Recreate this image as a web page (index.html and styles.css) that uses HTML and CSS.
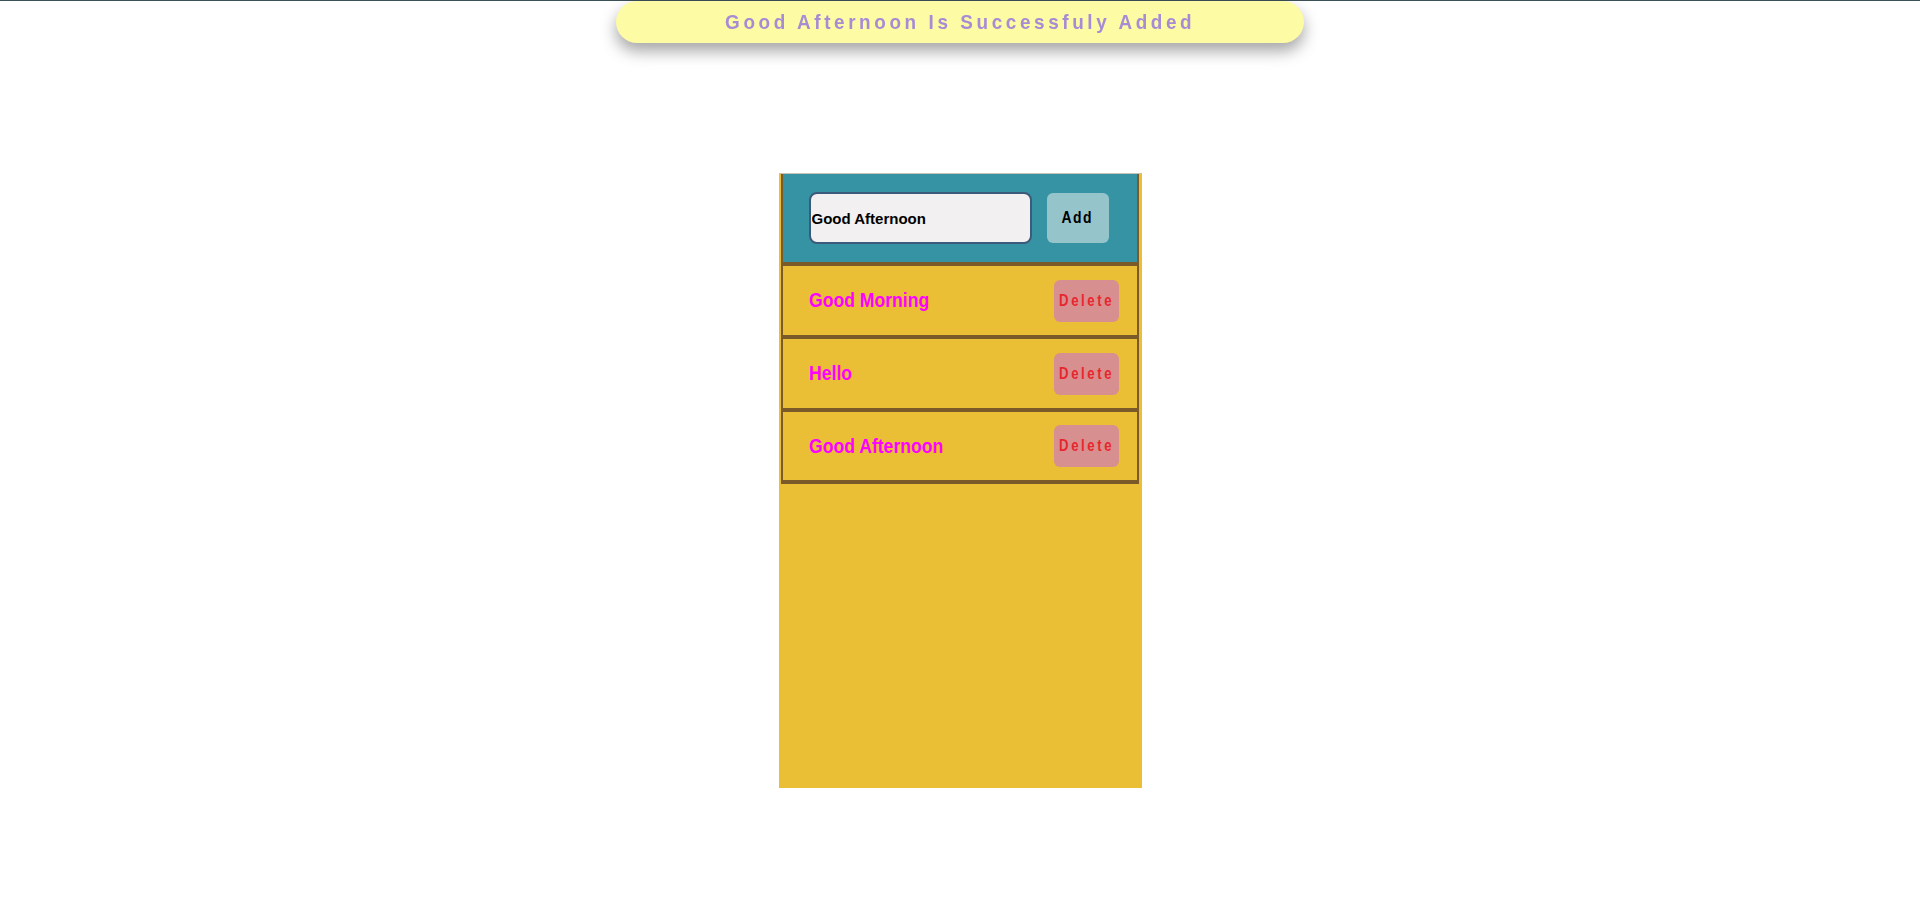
FILE: index.html
```html
<!DOCTYPE html>
<html lang="en">
<head>
<meta charset="utf-8">
<title>Todo</title>
<link rel="stylesheet" href="styles.css">
</head>
<body>
<div class="toast"><span class="toast-text">Good Afternoon Is Successfuly Added</span></div>
<main class="card">
  <div class="header">
    <input class="field" type="text" value="Good Afternoon">
    <button class="add-btn"><span class="btn-text">Add</span></button>
  </div>
  <ul class="list">
    <li class="item"><span class="item-text">Good Morning</span><button class="del-btn"><span class="btn-text">Delete</span></button></li>
    <li class="item"><span class="item-text">Hello</span><button class="del-btn"><span class="btn-text">Delete</span></button></li>
    <li class="item"><span class="item-text">Good Afternoon</span><button class="del-btn"><span class="btn-text">Delete</span></button></li>
  </ul>
</main>
</body>
</html>
```

FILE: styles.css
```css
html, body {
  margin: 0;
  padding: 0;
  background: #ffffff;
}
body {
  border-top: 1px solid #3c5058;
  font-family: "Liberation Sans", Arial, sans-serif;
  font-weight: bold;
  min-height: 916px;
}
.toast {
  position: fixed;
  top: 1px;
  left: 50%;
  transform: translateX(-50%);
  width: 688px;
  height: 42px;
  border-radius: 21px;
  background: #fdfba3;
  box-shadow: 0 8px 16px rgba(0, 0, 0, 0.36);
  display: flex;
  align-items: center;
  justify-content: center;
}
.toast-text {
  display: inline-block;
  color: #a58cd5;
  font-size: 21px;
  letter-spacing: 4px;
  white-space: nowrap;
  transform: scaleX(0.9);
  transform-origin: center;
}
.card {
  width: 363px;
  height: 615px;
  box-sizing: border-box;
  margin: 172px auto 0;
  padding: 0 3px 0 2px;
  background: #eabf35;
  border-top: 1px solid #c9c2b2;
}
.header {
  display: flex;
  align-items: center;
  gap: 15px;
  padding: 18px 28px 18px 26px;
  background: #3593a3;
  border: 2px solid #7b5a2a;
  border-top: none;
}
.field {
  width: 223px;
  height: 52px;
  box-sizing: border-box;
  margin: 0;
  padding: 0 1px;
  border: 2px solid #3c5a7a;
  border-radius: 8px;
  background: #f2f0f1;
  color: #000;
  font-family: inherit;
  font-weight: bold;
  font-size: 15px;
  outline: none;
}
.add-btn,
.del-btn {
  display: flex;
  align-items: center;
  justify-content: center;
  margin: 0;
  padding: 0;
  border: none;
  border-radius: 6px;
  font-family: inherit;
  font-weight: bold;
}
.add-btn {
  width: 62px;
  height: 50px;
  background: #95c5cb;
  color: #000;
  font-size: 17px;
  letter-spacing: 1.8px;
}
.btn-text {
  display: inline-block;
  white-space: nowrap;
  transform: scaleX(0.82);
  transform-origin: center;
}
.list {
  list-style: none;
  margin: 0;
  padding: 0;
  border-bottom: 2px solid #7b5a2a;
}
.item {
  display: flex;
  align-items: center;
  justify-content: space-between;
  height: 73px;
  box-sizing: border-box;
  padding: 0 18px 0 26px;
  border: 2px solid #7b5a2a;
}
.item:last-child {
  height: 72px;
}
.item-text {
  display: inline-block;
  color: #ff00ff;
  font-size: 20px;
  white-space: nowrap;
  transform: scaleX(0.88);
  transform-origin: left center;
}
.del-btn {
  width: 65px;
  height: 42px;
  padding-left: 2px;
  background: #d88f8f;
  color: #e8262e;
  font-size: 16px;
  letter-spacing: 3.2px;
}
```
